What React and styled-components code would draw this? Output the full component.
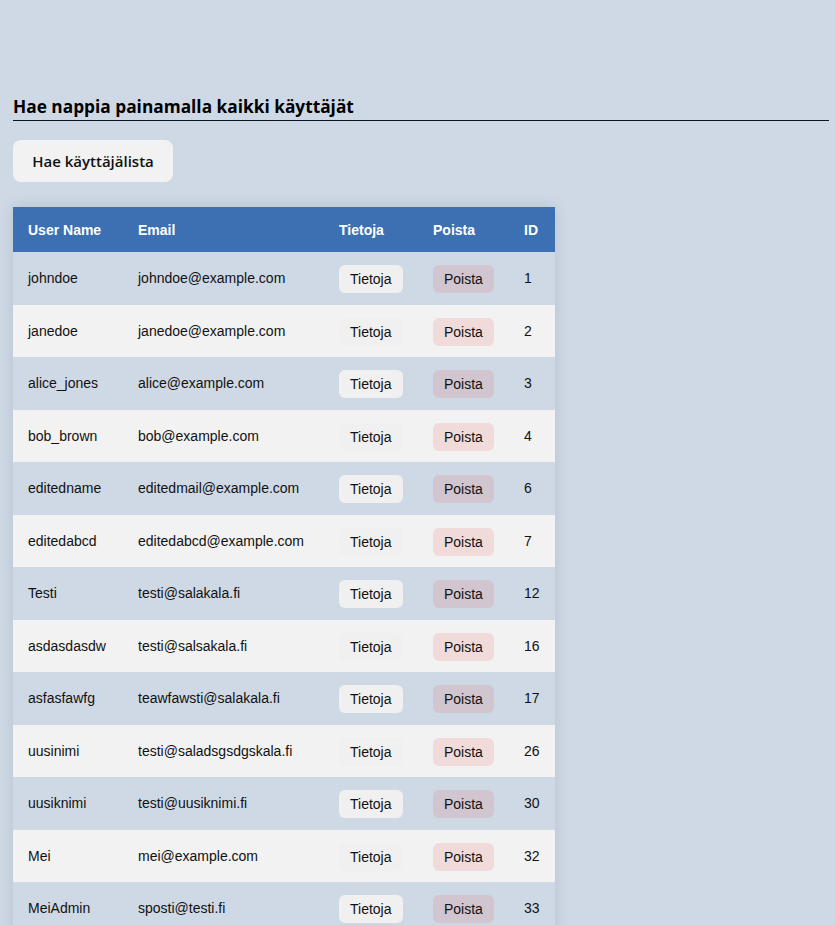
import React from "react";
import styled, { createGlobalStyle } from "styled-components";

const Global = createGlobalStyle`
  html, body { margin: 0; padding: 0; background: #cfd9e5; }
  body { font-family: "Liberation Sans", Arial, sans-serif; color: #111; }
`;

const Page = styled.div`
  padding: 96px 6px 0 13px;
`;

const Title = styled.h2`
  margin: 0;
  font-family: "Open Sans", "Noto Sans", sans-serif;
  font-size: 17.3px;
  font-weight: 700;
  line-height: 22px;
  padding-bottom: 2px;
  border-bottom: 1px solid #0d1524;
  color: #000;
`;

const FetchButton = styled.button`
  margin-top: 19px;
  width: 160px;
  height: 42px;
  border: none;
  border-radius: 8px;
  background: #f2f2f2;
  font-family: "Open Sans", "Noto Sans", sans-serif;
  font-size: 15px;
  font-weight: 600;
  color: #111;
  cursor: pointer;
`;

const Table = styled.table`
  margin-top: 25px;
  width: 542px;
  border-collapse: collapse;
  table-layout: fixed;
  box-shadow: 0 0 12px rgba(60, 80, 110, 0.18);
  font-size: 14px;
`;

const Th = styled.th`
  background: #3d6fb3;
  color: #fff;
  text-align: left;
  font-weight: 700;
  height: 45px;
  padding: 0 15px;
  width: ${(p) => p.$w}px;
  box-sizing: border-box;
`;

const Tr = styled.tr`
  height: 52.5px;
  background: ${(p) => (p.$alt ? "#f2f2f2" : "#cfd9e5")};
`;

const Td = styled.td`
  padding: 0 15px;
  vertical-align: middle;
  color: #111;
  white-space: nowrap;
`;

const SmallButton = styled.button`
  height: 28px;
  padding: 0 11px;
  border: none;
  border-radius: 6px;
  font-family: "Liberation Sans", Arial, sans-serif;
  font-size: 14px;
  color: #111;
  margin-top: 2px;
  background: ${(p) => (p.$danger ? "rgba(230, 60, 50, 0.12)" : "#f0f0f0")};
`;

const users = [
  ["johndoe", "johndoe@example.com", 1],
  ["janedoe", "janedoe@example.com", 2],
  ["alice_jones", "alice@example.com", 3],
  ["bob_brown", "bob@example.com", 4],
  ["editedname", "editedmail@example.com", 6],
  ["editedabcd", "editedabcd@example.com", 7],
  ["Testi", "testi@salakala.fi", 12],
  ["asdasdasdw", "testi@salsakala.fi", 16],
  ["asfasfawfg", "teawfawsti@salakala.fi", 17],
  ["uusinimi", "testi@saladsgsdgskala.fi", 26],
  ["uusiknimi", "testi@uusiknimi.fi", 30],
  ["Mei", "mei@example.com", 32],
  ["MeiAdmin", "sposti@testi.fi", 33],
];

export default function App() {
  return (
    <>
      <Global />
      <Page>
        <Title>Hae nappia painamalla kaikki käyttäjät</Title>
        <FetchButton>Hae käyttäjälista</FetchButton>
        <Table>
          <thead>
            <tr>
              <Th $w={110}>User Name</Th>
              <Th $w={201}>Email</Th>
              <Th $w={94}>Tietoja</Th>
              <Th $w={91}>Poista</Th>
              <Th $w={46}>ID</Th>
            </tr>
          </thead>
          <tbody>
            {users.map(([name, email, id], i) => (
              <Tr key={id} $alt={i % 2 === 1}>
                <Td>{name}</Td>
                <Td>{email}</Td>
                <Td>
                  <SmallButton>Tietoja</SmallButton>
                </Td>
                <Td>
                  <SmallButton $danger>Poista</SmallButton>
                </Td>
                <Td>{id}</Td>
              </Tr>
            ))}
          </tbody>
        </Table>
      </Page>
    </>
  );
}
